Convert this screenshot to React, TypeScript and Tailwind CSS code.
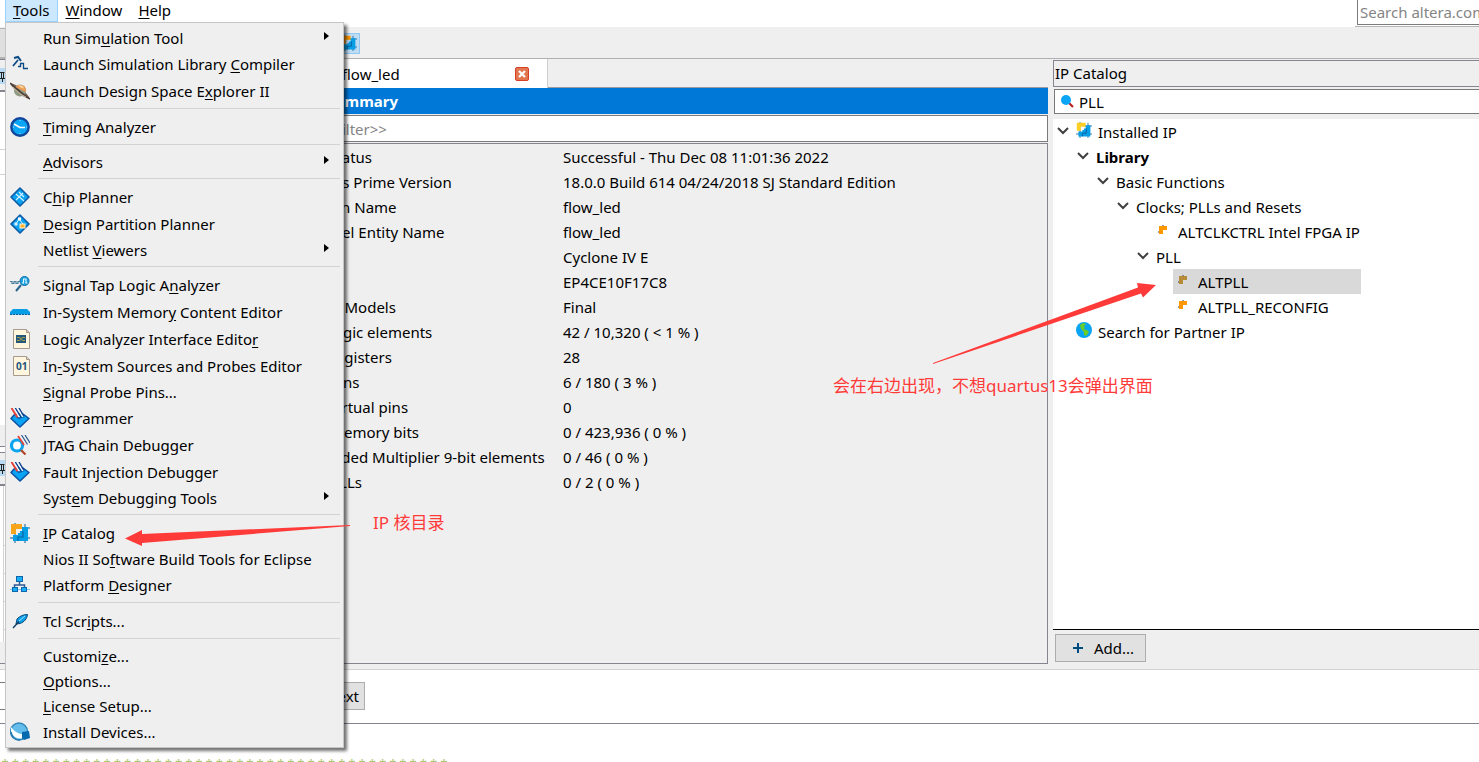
import type { ReactNode } from 'react'

type MenuEntry = { label: string; icon?: ReactNode; submenu?: boolean } | null

function LibraryCompilerIcon() {
  return (
    <svg viewBox="0 0 20 20" className="w-5 h-5" fill="none" stroke="#0a4a85">
      <path d="m3 12 5-6" strokeWidth="1.8" />
      <path d="m4 4 4-1 3 4" strokeWidth="2" />
      <path d="M8 12.500h2.500v-3h3v5H18" strokeWidth="1.300" />
    </svg>
  )
}

function PlanetIcon() {
  return (
    <svg viewBox="0 0 20 20" className="w-5 h-5">
      <path d="M0 2c7 1 17 9 20 16-7-1-17-9-20-16z" fill="#7a665b" />
      <circle cx="10" cy="9.500" r="6" fill="#8f9a80" />
      <path d="M5 7a6 6 0 0 1 10.500 0l.500 4C13 10 9 7 5 7z" fill="#ee9b54" />
      <path d="M8 4.500a6 6 0 0 1 5 1l1 2c-2 0-4-1-6-3z" fill="#fbd09a" />
      <path d="M0 2c6 5 13 12 20 16" stroke="#4a3c35" strokeWidth="1.5" fill="none" />
      <path d="M3 6c3 4 8 8 13 10" stroke="#cbb5a5" strokeWidth="1" fill="none" />
    </svg>
  )
}

function ClockIcon() {
  return (
    <svg viewBox="0 0 20 20" className="w-5 h-5">
      <circle cx="10" cy="10" r="8.7" fill="#0aa5f5" stroke="#11479b" strokeWidth="2.4" />
      <path d="m4 7 6 3.500h5" fill="none" stroke="#fff" strokeWidth="1.7" />
      <path d="M10 3v1M10 16v1M3 10h1M16 10h1" stroke="#9bdcff" />
    </svg>
  )
}

function ChipIcon() {
  return (
    <svg viewBox="0 0 20 20" className="w-5 h-5">
      <path d="m10 1 9 9-9 9-9-9z" fill="#0ba3f0" stroke="#0d5ca8" strokeWidth="1.6" strokeLinejoin="round" />
      <path d="m6 7 8 7M9 5l5 5M13 6l-7 7" stroke="#d8f2ff" strokeWidth="1.1" fill="none" />
    </svg>
  )
}

function PartitionIcon() {
  return (
    <svg viewBox="0 0 20 20" className="w-5 h-5">
      <path d="m10 1 9 9-9 9-9-9z" fill="#0ba3f0" stroke="#0d5ca8" strokeWidth="1.6" strokeLinejoin="round" />
      <path d="M9 5 6 10M9 5l4 5" stroke="#d8f2ff" />
      <rect x="8" y="3.500" width="3" height="3" fill="#fff" />
      <rect x="4.500" y="8.500" width="3" height="3" fill="#d8f2ff" />
      <rect x="10" y="10" width="5" height="4" fill="#ffb030" stroke="#fff3d0" />
    </svg>
  )
}

function SignalTapIcon() {
  return (
    <svg viewBox="0 0 20 20" className="w-5 h-5" fill="none">
      <path d="M0 6.500h2v2h2v-2h2v2h2v-2h2" stroke="#4c7f9f" strokeWidth="1.2" />
      <path d="m11 10-5 6" stroke="#23638f" strokeWidth="2" />
      <circle cx="14.500" cy="6" r="4.500" fill="#18a0de" stroke="#126fae" />
      <path d="M12 8h1.500V4h2.500v4h1.500" stroke="#e8faff" strokeWidth="1.1" />
    </svg>
  )
}

function MemoryIcon() {
  return (
    <svg viewBox="0 0 20 20" className="w-5 h-5">
      <path d="M0 12.500V10l3-3h14l3 3v2.500z" fill="#089ee5" />
      <path d="M0 12.500h20" stroke="#07609b" strokeDasharray="2 1" />
    </svg>
  )
}

function PageIcon({ children }: { children: ReactNode }) {
  return (
    <span className="relative block w-5 h-5">
      <svg viewBox="0 0 20 20" className="w-5 h-5">
        <path d="M3.500.500h13l3 3v16h-16z" fill="#fff6dd" stroke="#a99a90" />
        <path d="M16.500.500v3h3" fill="#d5c7b5" stroke="#a99a90" />
      </svg>
      {children}
    </span>
  )
}

function ProgrammerIcon() {
  return (
    <svg viewBox="0 0 20 20" className="w-5 h-5">
      <path d="M5 6h8l6 4.500-9 8.500-9-8.500z" fill="#0aa2f2" stroke="#0b50a0" strokeWidth="1.500" strokeLinejoin="round" />
      <path d="m3.500 0 6 9.500M7 0l6 9" stroke="#f4f8ff" strokeWidth="1.600" />
      <path d="m1.500 0 6 9.500" stroke="#e8443a" strokeWidth="2" />
      <path d="m5.300 0 6 9.500M9 0l5 8.500" stroke="#0c3f87" strokeWidth="1.400" />
      <path d="m6 9.500 9-.500-6 2z" fill="#0b50a0" />
    </svg>
  )
}

function JtagIcon() {
  return (
    <svg viewBox="0 0 20 20" className="w-5 h-5">
      <circle cx="7" cy="10.500" r="5.500" fill="#fff" stroke="#0aa5ef" strokeWidth="3.200" />
      <path d="m8 1 6 9" stroke="#e8443a" strokeWidth="1.800" />
      <path d="m11.500 0 6 9.500M15 0l5 8" stroke="#285891" strokeWidth="1.200" />
      <path d="m11 15 4.500 4.500" stroke="#ad4528" strokeWidth="2.200" />
    </svg>
  )
}

function CatalogIcon({ size = 'w-5 h-5', accent = '#f9a51b' }: { size?: string; accent?: string }) {
  return (
    <svg viewBox="0 0 20 20" className={size}>
      <path d="M5 0v20M15 1v19M0 15h20M9 5h11" stroke="#0e5b99" />
      <path d="M10 10V8h2V4h6v14H3v-6h5v-2z" fill="#069fe6" />
      <path d="M8 18v-4h5V8" fill="none" stroke="#0a63a5" strokeWidth="1.200" />
      <path d="M1 1h11v5H6v5H1z" fill={accent} />
    </svg>
  )
}

function PlatformIcon() {
  return (
    <svg viewBox="0 0 20 20" className="w-5 h-5">
      <path d="M9.500 6v4M4.500 13v-3h10v3" fill="none" stroke="#315a92" strokeWidth="1.500" />
      <path d="M0 14.500h20" stroke="#7cc9f0" />
      <g fill="#18adf5" stroke="#0c65ad">
        <rect x="6.500" y="1.500" width="6" height="5" />
        <rect x="2.500" y="12.500" width="5" height="4" />
        <rect x="11.500" y="12.500" width="5" height="4" />
      </g>
    </svg>
  )
}

function FeatherIcon() {
  return (
    <svg viewBox="0 0 20 20" className="w-5 h-5">
      <path d="m6 13 1-5c3-3 6-4.500 10.500-4.500-.500 4-3 7.500-7.500 9z" fill="#0a9fe8" stroke="#0b4779" />
      <path d="m3 17 6-6.500" stroke="#08385f" strokeWidth="1.300" />
      <path d="m9 10 6-5" stroke="#9bdfff" fill="none" />
    </svg>
  )
}

function InstallIcon() {
  return (
    <svg viewBox="0 0 20 20" className="w-5 h-5">
      <circle cx="9" cy="9.500" r="8.500" fill="#65bdec" stroke="#3286b9" strokeWidth="1.400" />
      <path d="M1 5c3 4 7 7 11 7l1 4C6 18 0 13 1 5z" fill="#fff" />
      <path d="M1 10c1 6 5 8 9 8" fill="none" stroke="#2279b1" strokeWidth="1.500" />
      <path d="m12 10 7-1 1 7-6 2-2-2z" fill="#0769ae" />
    </svg>
  )
}

function GlobeIcon() {
  return (
    <svg viewBox="0 0 16 16" className="w-4 h-4 mb-1">
      <circle cx="8" cy="8" r="8" fill="#09a5f2" />
      <path d="M4 3c2-2 5-2 6-1L8 4l1 2-2 1 4 1 2 2-3 4-2-1V10L5 7z" fill="#68ce25" />
    </svg>
  )
}

function BlockIcon({ color }: { color: string }) {
  return (
    <svg viewBox="0 0 10 10" className="w-2.5 h-2.5 mb-[3px]">
      <path d="M5 0v2M0 7h2" stroke="#333" />
      <path d="M1 1h8v4H5v4H1z" fill={color} />
    </svg>
  )
}

function PinIcon() {
  return (
    <div className="w-4 h-4 bg-[#b9daf3]">
      <svg viewBox="0 0 16 16" className="w-4 h-4" fill="none" stroke="#222">
        <path d="M0 4.500h4.500M1.500 4v6M3.500 4v6M0 10.500h5M2.500 11v3" />
      </svg>
    </div>
  )
}

function Chevron() {
  return (
    <svg viewBox="0 0 12 12" className="w-3 h-3 mb-px" fill="none" stroke="#404040" strokeWidth="2">
      <path d="m1 3 5 5 5-5" />
    </svg>
  )
}

const menu: MenuEntry[] = [
  { label: 'Run Sim&ulation Tool', submenu: true },
  { label: 'Launch Simulation Library &Compiler', icon: <LibraryCompilerIcon /> },
  { label: 'Launch Design Space E&xplorer II', icon: <PlanetIcon /> },
  null,
  { label: '&Timing Analyzer', icon: <ClockIcon /> },
  null,
  { label: '&Advisors', submenu: true },
  null,
  { label: 'C&hip Planner', icon: <ChipIcon /> },
  { label: '&Design Partition Planner', icon: <PartitionIcon /> },
  { label: 'Netlist &Viewers', submenu: true },
  null,
  { label: 'Signal Tap Logic A&nalyzer', icon: <SignalTapIcon /> },
  { label: 'In-System Memor&y Content Editor', icon: <MemoryIcon /> },
  {
    label: 'Logic Analyzer Interface Edito&r',
    icon: (
      <PageIcon>
        <svg viewBox="0 0 10 8" className="absolute left-1.5 top-1.5 w-2.5 h-2">
          <path d="M0 0h10v8H0z" fill="#23577d" />
          <path d="M1 2.500h2l2 1 2-1h2M1 5.500h2l2-1 2 1h2" stroke="#c9b13d" strokeWidth="0.800" fill="none" />
        </svg>
      </PageIcon>
    ),
  },
  {
    label: 'In&-System Sources and Probes Editor',
    icon: (
      <PageIcon>
        <span className="absolute left-1.5 top-1 text-[10px] leading-3 font-bold text-[#1d5480]">01</span>
      </PageIcon>
    ),
  },
  { label: '&Signal Probe Pins...' },
  { label: '&Programmer', icon: <ProgrammerIcon /> },
  { label: '&JTAG Chain Debugger', icon: <JtagIcon /> },
  { label: 'Fault Injection Debugger', icon: <ProgrammerIcon /> },
  { label: 'Syst&em Debugging Tools', submenu: true },
  null,
  { label: '&IP Catalog', icon: <CatalogIcon /> },
  { label: 'Nios II So&ftware Build Tools for Eclipse' },
  { label: 'Platform &Designer', icon: <PlatformIcon /> },
  null,
  { label: 'Tcl Scr&ipts...', icon: <FeatherIcon /> },
  null,
  { label: 'Customi&ze...' },
  { label: '&Options...' },
  { label: '&License Setup...' },
  { label: 'Install Devices...', icon: <InstallIcon /> },
]

const summary = [
  ['Flow Status', 'Successful - Thu Dec 08 11:01:36 2022'],
  ['Quartus Prime Version', '18.0.0 Build 614 04/24/2018 SJ Standard Edition'],
  ['Revision Name', 'flow_led'],
  ['Top-level Entity Name', 'flow_led'],
  ['Family', 'Cyclone IV E'],
  ['Device', 'EP4CE10F17C8'],
  ['Timing Models', 'Final'],
  ['Total logic elements', '42 / 10,320 ( < 1 % )'],
  ['Total registers', '28'],
  ['Total pins', '6 / 180 ( 3 % )'],
  ['Total virtual pins', '0'],
  ['Total memory bits', '0 / 423,936 ( 0 % )'],
  ['Embedded Multiplier 9-bit elements', '0 / 46 ( 0 % )'],
  ['Total PLLs', '0 / 2 ( 0 % )'],
]

// "&" marks the letter that is the keyboard shortcut
function Mnemonic({ text }: { text: string }) {
  const at = text.indexOf('&')
  if (at < 0) return <span>{text}</span>
  return (
    <span>
      {text.slice(0, at)}
      <span className="underline underline-offset-2">{text[at + 1]}</span>
      {text.slice(at + 2)}
    </span>
  )
}

function ToolsMenu() {
  return (
    <div className="absolute left-[5px] top-[22px] z-10 w-[339px] bg-[#efefef] border border-[#c6c6c6] py-[2px] shadow-[3px_3px_3px_rgba(0,0,0,0.55)]">
      {menu.map((entry, i) =>
        entry ? (
          <button
            key={i}
            className={`flex w-full items-center pl-1 pr-[14px] text-left ${entry.icon ? 'h-[27px]' : 'h-[25px]'}`}
          >
            <span className="w-[33px] shrink-0">{entry.icon}</span>
            <span className="flex-1">
              <Mnemonic text={entry.label} />
            </span>
            {entry.submenu && (
              <svg viewBox="0 0 5 8" className="w-[5px] h-2 mb-[3px]">
                <path d="m0 0 5 4-5 4z" />
              </svg>
            )}
          </button>
        ) : (
          <div key={i} className="h-[9px] pt-1 pl-8 pr-[3px]">
            <div className="h-px bg-[#d3d3d3]" />
          </div>
        ),
      )}
    </div>
  )
}

function LeftDock() {
  return (
    <aside className="flex w-40 shrink-0 flex-col border-t border-[#85858f]">
      <div className="h-8 shrink-0 border-b-2 border-[#85858f] pt-2">
        <PinIcon />
      </div>
      <div className="h-[333px] shrink-0 bg-white">
        <div className="h-[58px] border-b border-[#d3d3d3]" />
        <div className="h-[25px] border-b border-[#d3d3d3]" />
      </div>
      <div className="h-[22px] shrink-0 border-b border-[#85858f]" />
      <div className="h-[6px] shrink-0 bg-white border-b border-[#85858f]" />
      <div className="h-[33px] shrink-0 border-b-2 border-[#85858f] pt-[7px]">
        <PinIcon />
      </div>
      <div className="flex-1 bg-white">
        <div className="ml-[3px] h-full border-l border-[#d3d3d3]">
          <div className="h-[60px] border-b border-[#d3d3d3]" />
          <div className="h-7 border-b border-[#d3d3d3]" />
          <div className="h-7 border-b border-[#d3d3d3]" />
          <div className="h-7 border-b border-[#d3d3d3]" />
        </div>
      </div>
      <div className="h-[22px] shrink-0 border-b border-[#85858f] mb-[5px]" />
    </aside>
  )
}

function Report() {
  return (
    <main className="flex min-w-0 flex-1 flex-col pb-[5px] pr-[5px]">
      <div className="flex h-[29px] shrink-0 items-stretch border-b border-[#9a9aa0]">
        <div className="flex w-[388px] items-center border-r border-[#d0d0d0] bg-white pl-8 pr-[18px] -mb-px">
          <span className="flex-1">Compilation Report - flow_led</span>
          <button aria-label="Close tab">
            <svg viewBox="0 0 14 14" className="w-3.5 h-3.5">
              <rect x="0.500" y="0.500" width="13" height="13" rx="1.500" fill="#e2764f" stroke="#d5402b" />
              <path d="m4 4 6 6M10 4l-6 6" stroke="#fff" strokeWidth="2.200" />
            </svg>
          </button>
        </div>
      </div>
      <div className="flex min-h-0 flex-1">
        <div className="w-[128px] shrink-0 bg-white" />
        <section className="flex min-w-0 flex-1 flex-col">
          <h2 className="flex h-[26px] shrink-0 items-center bg-[#0078d7] font-bold text-white">Flow Summary</h2>
          <input
            aria-label="Filter"
            placeholder="<<Filter>>"
            className="mt-px h-[27px] w-full shrink-0 border border-[#7a7a7a] bg-white pl-7 outline-none placeholder:text-[#858585]"
          />
          <div className="mt-px flex-1 border border-[#85858f]">
            <table className="w-full table-fixed">
              <tbody>
                {summary.map(([name, value]) => (
                  <tr key={name} className="h-[25px]">
                    <td className="w-[274px] whitespace-nowrap p-0 pl-[3px]">{name}</td>
                    <td className="whitespace-nowrap p-0">{value}</td>
                  </tr>
                ))}
              </tbody>
            </table>
          </div>
        </section>
      </div>
    </main>
  )
}

function Branch({ label, pad, children }: { label: string; pad: string; children?: ReactNode }) {
  return (
    <div className={`flex h-[25px] items-center ${pad}`}>
      <Chevron />
      {children}
      <span className={label === 'Library' ? 'ml-[7px] font-bold' : 'ml-[7px]'}>{label}</span>
    </div>
  )
}

function IpCatalog() {
  return (
    <aside className="flex w-[426px] shrink-0 flex-col">
      <h2 className="flex h-[27px] shrink-0 items-center border border-r-0 border-[#85858f] pl-px pb-[2px] mt-px">IP Catalog</h2>
      <div className="ml-px mt-[2px] flex h-[25px] shrink-0 items-center border border-r-0 border-[#7a7a7a] bg-white pl-[6px]">
        <svg viewBox="0 0 13 13" className="w-[13px] h-[13px]">
          <path d="m8 8 4 4" stroke="#b81f1f" strokeWidth="2.200" />
          <circle cx="5" cy="5" r="5" fill="#0aa5f5" />
        </svg>
        <input aria-label="Search IP" defaultValue="PLL" className="ml-[5px] min-w-0 flex-1 outline-none" />
      </div>
      <div className="mt-[5px] flex-1 border-b border-black bg-white">
        <Branch label="Installed IP" pad="pl-1">
          <span className="ml-[7px] mb-[3px] -mr-px">
            <CatalogIcon size="w-4 h-4" accent="#fdcf22" />
          </span>
        </Branch>
        <Branch label="Library" pad="pl-6" />
        <Branch label="Basic Functions" pad="pl-11" />
        <Branch label="Clocks; PLLs and Resets" pad="pl-16" />
        <div className="ml-[100px] flex h-[25px] items-center gap-[10px] pl-[5px]">
          <BlockIcon color="#ff9800" />
          ALTCLKCTRL Intel FPGA IP
        </div>
        <Branch label="PLL" pad="pl-[84px]" />
        <div className="ml-[120px] flex h-[25px] w-[188px] items-center gap-[10px] bg-[#d9d9d9] pl-[5px]">
          <BlockIcon color="#b78c38" />
          ALTPLL
        </div>
        <div className="ml-[120px] flex h-[25px] items-center gap-[10px] pl-[5px]">
          <BlockIcon color="#ff9800" />
          ALTPLL_RECONFIG
        </div>
        <div className="flex h-[25px] items-center gap-[6px] pl-[23px]">
          <GlobeIcon />
          Search for Partner IP
        </div>
      </div>
      <div className="h-[39px] shrink-0 pl-[2px] pt-1">
        <button className="flex h-7 w-[91px] items-center gap-[11px] border border-[#adadad] bg-[#e1e1e1] pl-[17px]">
          <svg viewBox="0 0 10 10" className="w-2.5 h-2.5">
            <path d="M5 0v10M0 5h10" stroke="#004a80" strokeWidth="2" />
          </svg>
          Add...
        </button>
      </div>
    </aside>
  )
}

export default function App() {
  return (
    <div className="relative flex h-screen flex-col overflow-hidden bg-[#efefef] font-['Noto_Sans','Noto_Sans_CJK_SC',sans-serif] text-[15px] leading-5 text-black">
      <nav className="flex h-[28px] shrink-0 items-start border-b border-[#efefef] bg-white pl-[5px]">
        <button className="flex h-[22px] items-center border border-t-0 border-[#99d1ff] bg-[#cce8ff] px-[7px] pb-[2px]">
          <Mnemonic text="&Tools" />
        </button>
        <button className="flex h-[22px] items-center px-2 pb-[3px]">
          <Mnemonic text="&Window" />
        </button>
        <button className="flex h-[22px] items-center px-2 pb-[3px]">
          <Mnemonic text="&Help" />
        </button>
        <div className="ml-auto h-[27px] w-[124px] border-b border-[#b4b4b4] pl-[2px]">
          <input
            aria-label="Search altera.com"
            placeholder="Search altera.com"
            className="h-[25px] w-full border-b border-l border-[#7a7a7a] pl-[2px] outline-none placeholder:text-[#858585]"
          />
        </div>
      </nav>

      {/* Toolbar */}
      <div className="flex h-[31px] shrink-0 items-center border-b border-[#b0b0b0]">
        <button aria-label="Toolbar" className="h-full w-80 border-y border-[#b4b4b4] bg-[#dfdfdf]" />
        <button aria-label="IP Catalog" className="ml-[18px] flex h-[21px] w-[22px] items-center justify-center border border-[#90c8f6] bg-[#c0dcf3]">
          <CatalogIcon size="w-4 h-4" accent="#ff9800" />
        </button>
      </div>

      <div className="flex min-h-0 flex-1">
        <LeftDock />
        <Report />
        <IpCatalog />
      </div>

      {/* Messages */}
      <footer className="h-[93px] shrink-0 overflow-hidden border-t border-[#d3d3d3] bg-white">
        <div className="flex h-[54px] items-center border-b border-[#85858f] pb-px">
          <input aria-label="Find" className="h-7 w-[280px] border-y border-[#7a7a7a] outline-none" />
          <button className="ml-[10px] h-7 w-[75px] border border-[#adadad] bg-[#e1e1e1] pr-[5px] text-right">Next</button>
        </div>
        <div className="mt-[33px] whitespace-nowrap font-['Liberation_Mono',monospace] text-[17px] text-[#a9c26a]">{'*'.repeat(44)}</div>
      </footer>

      <ToolsMenu />

      {/* Red notes drawn over the window */}
      <svg viewBox="0 0 225 24" className="pointer-events-none absolute left-[125px] top-[523px] z-20 w-[225px] h-6">
        <path d="m0 15.500 17-8.500v4L225 2v1L17 20v3z" fill="#ff3b3a" />
      </svg>
      <p className="absolute left-[373px] top-[513px] z-20 text-[17px] text-[#ff3b3a]">IP 核目录</p>
      <svg viewBox="0 0 224 82" className="pointer-events-none absolute left-[933px] top-[283px] z-20 w-[224px] h-[82px]">
        <path d="M0 80 205 4.500 204 0l19 2-13 12.500-2-4L0 81z" fill="#ff3b3a" />
      </svg>
      <p className="absolute left-[833px] top-[376px] z-20 whitespace-nowrap text-[17px] text-[#ff3b3a]">
        会在右边出现，不想quartus13会弹出界面
      </p>
    </div>
  )
}
